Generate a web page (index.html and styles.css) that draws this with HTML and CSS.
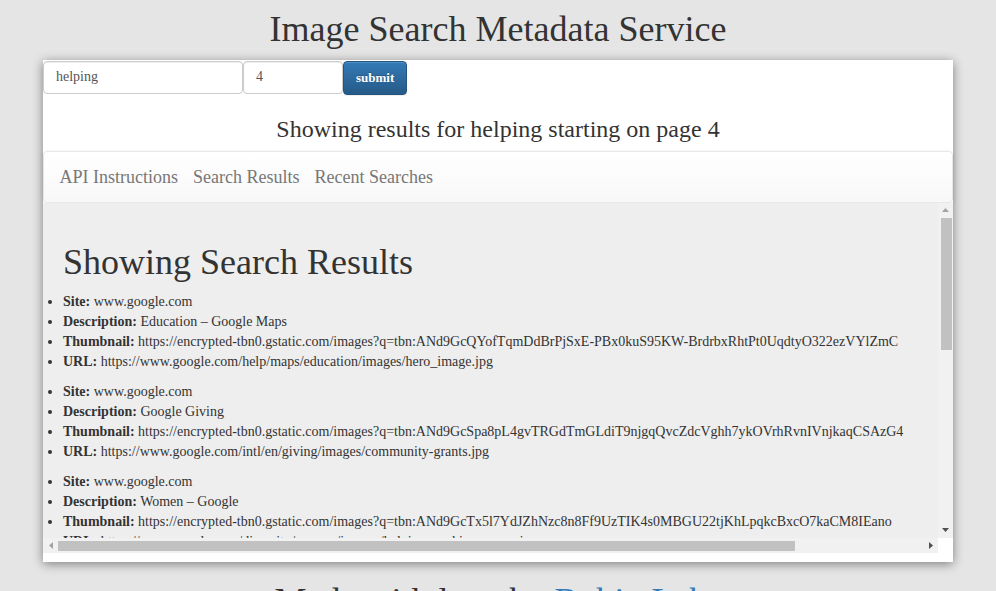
FILE: index.html
```html
<!DOCTYPE html>
<html lang="en">
<head>
<meta charset="utf-8">
<title>Image Search Metadata Service</title>
<link rel="stylesheet" href="styles.css">
</head>
<body>
<h1 class="title">Image Search Metadata Service</h1>
<main class="panel">
  <form class="search-form">
    <input class="field field-query" type="text" value="helping">
    <input class="field field-page" type="text" value="4">
    <button class="btn-submit" type="button">submit</button>
  </form>
  <h3 class="summary">Showing results for helping starting on page 4</h3>
  <nav class="navbar">
    <a class="nav-link" href="#">API Instructions</a>
    <a class="nav-link" href="#">Search Results</a>
    <a class="nav-link" href="#">Recent Searches</a>
  </nav>
  <section class="results-scroll">
    <div class="viewport">
      <div class="pane">
        <h1 class="pane-title">Showing Search Results</h1>
        <ul class="result">
          <li><b>Site:</b> www.google.com</li>
          <li><b>Description:</b> Education – Google Maps</li>
          <li><b>Thumbnail:</b> https://encrypted-tbn0.gstatic.com/images?q=tbn:ANd9GcQYofTqmDdBrPjSxE-PBx0kuS95KW-BrdrbxRhtPt0UqdtyO322ezVYlZmC</li>
          <li><b>URL:</b> https://www.google.com/help/maps/education/images/hero_image.jpg</li>
        </ul>
        <ul class="result">
          <li><b>Site:</b> www.google.com</li>
          <li><b>Description:</b> Google Giving</li>
          <li><b>Thumbnail:</b> https://encrypted-tbn0.gstatic.com/images?q=tbn:ANd9GcSpa8pL4gvTRGdTmGLdiT9njgqQvcZdcVghh7ykOVrhRvnIVnjkaqCSAzG4</li>
          <li><b>URL:</b> https://www.google.com/intl/en/giving/images/community-grants.jpg</li>
        </ul>
        <ul class="result">
          <li><b>Site:</b> www.google.com</li>
          <li><b>Description:</b> Women – Google</li>
          <li><b>Thumbnail:</b> https://encrypted-tbn0.gstatic.com/images?q=tbn:ANd9GcTx5l7YdJZhNzc8n8Ff9UzTIK4s0MBGU22tjKhLpqkcBxcO7kaCM8IEano</li>
          <li><b>URL:</b> https://www.google.com/diversity/women/images/helping-working-moms.jpg</li>
        </ul>
      </div>
    </div>
    <div class="vbar" aria-hidden="true">
      <span class="sb-btn">
        <svg width="7" height="4" viewBox="0 0 7 4"><polygon points="3.5,0 7,4 0,4" fill="#a3a3a3"/></svg>
      </span>
      <span class="vtrack"><span class="vthumb"></span></span>
      <span class="sb-btn">
        <svg width="7" height="4" viewBox="0 0 7 4"><polygon points="0,0 7,0 3.5,4" fill="#505050"/></svg>
      </span>
    </div>
    <div class="hbar" aria-hidden="true">
      <span class="sb-btn">
        <svg width="4" height="7" viewBox="0 0 4 7"><polygon points="4,0 4,7 0,3.5" fill="#a3a3a3"/></svg>
      </span>
      <span class="htrack"><span class="hthumb"></span></span>
      <span class="sb-btn">
        <svg width="4" height="7" viewBox="0 0 4 7"><polygon points="0,0 4,3.5 0,7" fill="#505050"/></svg>
      </span>
    </div>
    <div class="sb-corner"></div>
  </section>
</main>
<h1 class="footer">Made with love by <a class="footer-link" href="#">Robin Labs</a></h1>
</body>
</html>
```

FILE: styles.css
```css
html, body {
  margin: 0;
  padding: 0;
}

body {
  background: #e5e5e5;
  font-family: "Liberation Serif", "Times New Roman", serif;
  font-size: 14px;
  line-height: 20px;
  color: #333;
  overflow: hidden;
}

.title {
  margin: 0;
  padding-top: 10px;
  font-size: 36px;
  font-weight: 500;
  line-height: 1.1;
  text-align: center;
}

.panel {
  width: 910px;
  margin: 10px auto 0;
  padding: 1px 0 9px;
  background: #fff;
  box-shadow: 0 2px 10px rgba(0, 0, 0, 0.45);
}

.search-form {
  display: flex;
  align-items: flex-start;
  margin: 0;
}

.field {
  box-sizing: border-box;
  height: 33px;
  padding: 6px 12px;
  border: 1px solid #ccc;
  border-radius: 4px;
  font-family: inherit;
  font-size: 14px;
  color: #555;
  background: #fff;
  box-shadow: inset 0 1px 1px rgba(0, 0, 0, 0.075);
}

.field-query {
  width: 200px;
}

.field-page {
  width: 100px;
}

.btn-submit {
  box-sizing: border-box;
  height: 34px;
  padding: 6px 12px;
  border: 1px solid #245580;
  border-radius: 4px;
  background-image: linear-gradient(to bottom, #337ab7 0, #265a88 100%);
  color: #fff;
  font-family: inherit;
  font-size: 13px;
  font-weight: bold;
  text-shadow: 0 -1px 0 rgba(0, 0, 0, 0.2);
  box-shadow: inset 0 1px 0 rgba(255, 255, 255, 0.15), 0 1px 1px rgba(0, 0, 0, 0.075);
}

.summary {
  margin: 21px 0 9px;
  font-size: 24px;
  font-weight: 500;
  line-height: 1.1;
  text-align: center;
}

.navbar {
  display: flex;
  height: 50px;
  padding: 0 8px;
  border: 1px solid #e7e7e7;
  border-radius: 4px;
  background-image: linear-gradient(to bottom, #fff 0, #f8f8f8 100%);
  box-shadow: inset 0 1px 0 rgba(255, 255, 255, 0.15), 0 1px 5px rgba(0, 0, 0, 0.075);
}

.nav-link {
  padding: 15px 7.5px;
  font-size: 18px;
  line-height: 20px;
  color: #777;
  text-decoration: none;
  text-shadow: 0 1px 0 rgba(255, 255, 255, 0.25);
}

.results-scroll {
  display: grid;
  grid-template-columns: 1fr 15px;
  grid-template-rows: 335px 15px;
}

.viewport {
  overflow: hidden;
  background: #eee;
}

.pane {
  padding: 20px 0 0 20px;
}

.pane-title {
  margin: 20px 0 9px;
  font-size: 36px;
  font-weight: 500;
  line-height: 1.1;
}

.result {
  margin: 0 0 10px;
  padding: 0;
  white-space: nowrap;
}

.vbar {
  display: flex;
  flex-direction: column;
  background: #f1f1f1;
}

.hbar {
  display: flex;
  background: #f1f1f1;
}

.sb-btn {
  display: flex;
  flex: 0 0 15px;
  width: 15px;
  height: 15px;
  align-items: center;
  justify-content: center;
}

.vtrack {
  flex: 1;
  display: flex;
  flex-direction: column;
}

.vthumb {
  height: 132px;
  margin: 0 1px 0 3px;
  background: #c1c1c1;
}

.htrack {
  flex: 1;
  display: flex;
  align-items: center;
}

.hthumb {
  width: 737px;
  height: 10px;
  margin-top: 1px;
  background: #c1c1c1;
}

.sb-corner {
  background: #fff;
}

.footer {
  margin: 20px 0 0;
  font-size: 36px;
  font-weight: 500;
  line-height: 1.1;
  text-align: center;
}

.footer-link {
  color: #337ab7;
  text-decoration: none;
}
```
